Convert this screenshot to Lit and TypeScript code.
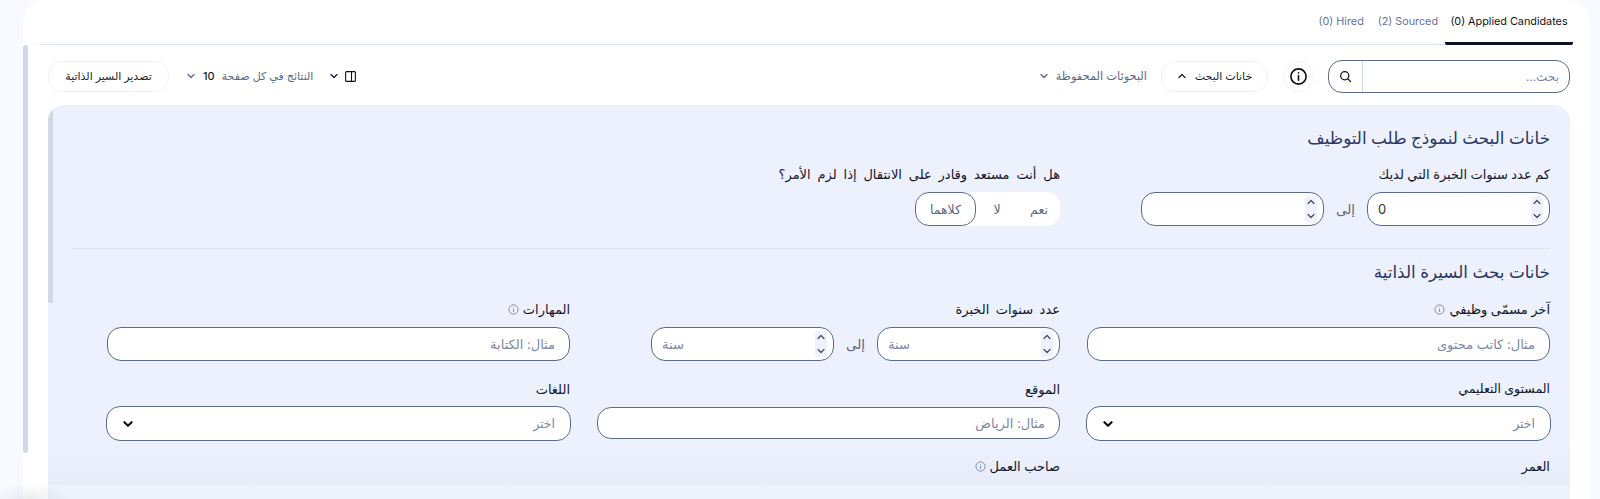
import { LitElement, html, css, svg } from "lit";
import { customElement } from "lit/decorators.js";

const chev = (up = false, size = 10, sw = 1.3) => html`<svg width=${size} height=${size} viewBox="0 0 10 10" fill="none" stroke="currentColor" stroke-width=${sw} stroke-linecap="round" stroke-linejoin="round">${up ? svg`<path d="M2 6.5 5 3.5 8 6.5"/>` : svg`<path d="M2 3.5 5 6.5 8 3.5"/>`}</svg>`;

const info = () => html`<svg class="inf" width="11" height="11" viewBox="0 0 12 12" fill="none" stroke="#6b7a9c" stroke-width=".9"><circle cx="6" cy="6" r="5"/><path d="M6 5.4V8.6M6 3.4v.8"/></svg>`;

@customElement("app-root")
export class AppRoot extends LitElement {
  static styles = css`
    :host { display: block; width: 1600px; height: 499px; overflow: hidden; position: relative; background: #f8faff;
      font-family: "Inter", "Noto Sans", "DejaVu Sans", sans-serif; color: #1a1f33; }
    * { box-sizing: border-box; }
    .card { position: absolute; left: 23px; top: 0; width: 1567px; height: 499px; background: #fff; border-radius: 24px 24px 0 0; padding: 0 17px 0 16px; }
    .sb { position: absolute; background: #cfd8e6; border-radius: 3px; width: 5px; }
    .sb.outer { left: 0; top: 45px; height: 408px; }
    .sb.inner { left: 0; top: 0; height: 198px; z-index: 2; }
    .tabs { height: 45px; display: flex; justify-content: flex-end; border-bottom: 1px solid #dbe4f0; font-size: 10.8px; }
    .tab { height: 45px; padding: 15px 7px 0; color: #64749a; white-space: nowrap; }
    .tab.on { color: #0f1222; border-bottom: 3px solid #0f1222; width: 128px; padding: 15px 0 0; text-align: center; border-radius: 0 0 2px 2px; }
    .tool { direction: rtl; display: flex; align-items: center; height: 32px; margin-top: 15px; padding: 0 3px 0 9px; font-size: 11px; }
    .search { width: 242px; height: 33px; border: 1px solid #5a6b8c; border-radius: 14px; display: flex; align-items: center; background: #fff; }
    .search input { flex: 1; min-width: 0; height: 100%; border: 0; background: none; outline: 0; padding: 0 10px; font: inherit; font-size: 12px; text-align: right; direction: rtl; }
    .search input::placeholder { color: #7c88a6; }
    .search .ic { width: 34px; height: 100%; border-right: 1px solid #cfd8e6; display: flex; align-items: center; justify-content: center; }
    .round { width: 31px; height: 31px; border-radius: 50%; border: 1px solid #eef2fb; display: flex; align-items: center; justify-content: center; margin-right: 14px; }
    .pill { height: 31px; border: 1px solid #eef2fb; border-radius: 14px; display: flex; align-items: center; justify-content: center; gap: 8px; font-weight: 500; color: #1a1f33; background: #fff; white-space: nowrap; }
    .pill.fields { width: 107px; margin-right: 15px; }
    .pill.export { width: 121px; }
    .saved { display: flex; align-items: center; gap: 7px; color: #5d6780; margin-right: 14px; white-space: nowrap; font-size: 11.4px; }
    .spacer { flex: 1; }
    .pager { display: flex; align-items: center; gap: 7px; color: #5d6780; white-space: nowrap; margin-left: 17px; }
    .pager b { font-weight: 500; color: #1a1f33; }
    .cols { display: flex; align-items: center; gap: 6px; margin-left: 16px; color: #1a1f33; }
    .panel { direction: rtl; position: relative; height: 394px; margin-top: 13px; margin-left: 9px; margin-right: 3px; background: #edf1fd; border-radius: 16px 16px 0 0; padding: 23px 20px 0 24px; overflow: hidden; }
    .content { position: relative; z-index: 1; }
    h2 { margin: 0; font-size: 16.8px; font-weight: 500; color: #2a3762; line-height: 20px; }
    .grid { display: grid; grid-template-columns: repeat(3, 463px); column-gap: 27px; }
    .grid.first { margin-top: 17px; padding-bottom: 22px; border-bottom: 1px solid #dfe3ee; }
    .f { display: flex; flex-direction: column; }
    label { font-size: 13px; font-weight: 500; line-height: 18px; height: 18px; display: flex; align-items: center; gap: 4px; color: #12162a; margin-bottom: 9px; white-space: nowrap; }
    label.wide { word-spacing: 3.4px; }
    label.mid { word-spacing: 3px; }
    label.tight { font-size: 12.5px; }
    .row2 { margin-top: 19px; }
    .row2 label { margin-bottom: 8px; }
    .row3 { margin-top: 16px; }
    h2.second { margin-top: 13px; }
    .g2 { margin-top: 18px; }
    .inp { height: 34px; border: 1px solid #5a6b8c; border-radius: 14px; background: #fff; display: flex; align-items: center; position: relative; }
    .inp input { flex: 1; min-width: 0; width: 100%; height: 100%; border: 0; background: none; outline: 0; padding: 0 14px; font: inherit; font-size: 13px; text-align: right; direction: rtl; color: #333; }
    .inp input::placeholder { color: #7c88a6; }
    .inp.loc { height: 32px; margin: 1px 0 2px; }
    .sel { height: 35px; margin: 0 -1px; justify-content: space-between; padding: 0 15px; font-size: 12.5px; color: #7c88a6; }
    .sel svg { color: #111; }
    .range { display: flex; align-items: center; }
    .range .inp { width: 183px; }
    .range span.to { width: 43px; text-align: center; font-size: 13.5px; color: #5d6780; }
    .num { direction: ltr; }
    .num input { direction: ltr; text-align: left; padding: 0 0 0 10px; }
    .spin { width: 12px; height: 26px; margin-right: 6px; background: #eef2fc; border-radius: 3px; display: flex; flex-direction: column; align-items: center; justify-content: space-between; padding: 1px 0; color: #3e4a68; flex: none; }
    .seg { width: 145px; height: 34px; background: #fff; border-radius: 14px; display: flex; align-items: center; font-size: 12.5px; color: #5d6780; }
    .seg div { flex: 1; text-align: center; height: 100%; display: flex; align-items: center; justify-content: center; }
    .seg .on { flex: none; width: 61px; border: 1px solid #5a6b8c; border-radius: 14px; }
    .fade { position: absolute; left: 0; right: 0; top: 340px; height: 40px; background: linear-gradient(to bottom, rgba(226,230,242,0), rgba(226,230,242,.42)); }
    .strip { position: absolute; left: 0; right: 0; top: 380px; height: 14px; background: #eef2fd; }
    .smudge { position: absolute; left: 0; bottom: 0; width: 70px; height: 16px; background: radial-gradient(ellipse at 30px 100%, rgba(120,128,145,.14), rgba(120,128,145,0) 72%); }
  `;

  private num(ph: string, val = "") {
    return html`<div class="inp num"><input placeholder=${ph} .value=${val} /><div class="spin">${chev(true, 10, 1.2)}${chev(false, 10, 1.2)}</div></div>`;
  }

  render() {
    return html`<div class="card">
      <div class="sb outer"></div>
      <div class="tabs">
        <div class="tab">(0) Hired</div>
        <div class="tab">(2) Sourced</div>
        <div class="tab on">(0) Applied Candidates</div>
      </div>
      <div class="tool">
        <div class="search">
          <input placeholder="بحث..." />
          <div class="ic"><svg width="13" height="13" viewBox="0 0 14 14" fill="none" stroke="#111" stroke-width="1.3" stroke-linecap="round"><circle cx="6.2" cy="6.2" r="4.4"/><path d="M9.6 9.6 12.4 12.4"/></svg></div>
        </div>
        <div class="round"><svg width="19" height="19" viewBox="0 0 20 20" fill="none" stroke="#111" stroke-width="1.7" stroke-linecap="round"><circle cx="10" cy="10" r="8"/><path d="M10 9v5M10 6v.2"/></svg></div>
        <div class="pill fields">خانات البحث ${chev(true)}</div>
        <div class="saved">البحوثات المحفوظة ${chev(false)}</div>
        <div class="spacer"></div>
        <div class="cols"><svg width="11" height="11" viewBox="0 0 11 11" fill="none" stroke="#111" stroke-width="1.1"><rect x=".6" y=".6" width="9.8" height="9.8" rx="1"/><path d="M6.5.6v9.8"/></svg>${chev(false)}</div>
        <div class="pager">النتائج في كل صفحة <b>10</b> ${chev(false)}</div>
        <div class="pill export">تصدير السير الذاتية</div>
      </div>
      <div class="panel">
        <div class="sb inner"></div>
        <div class="fade"></div>
        <div class="strip"></div>
        <div class="content">
        <h2>خانات البحث لنموذج طلب التوظيف</h2>
        <div class="grid first">
          <div class="f"><label>كم عدد سنوات الخبرة التي لديك</label>
            <div class="range">${this.num("", "0")}<span class="to">إلى</span>${this.num("")}</div></div>
          <div class="f"><label class="wide">هل أنت مستعد وقادر على الانتقال إذا لزم الأمر؟</label>
            <div class="seg"><div>نعم</div><div>لا</div><div class="on">كلاهما</div></div></div>
        </div>
        <h2 class="second">خانات بحث السيرة الذاتية</h2>
        <div class="grid g2">
          <div class="f"><label>آخر مسمّى وظيفي ${info()}</label><div class="inp"><input placeholder="مثال: كاتب محتوى" /></div></div>
          <div class="f"><label class="mid">عدد سنوات الخبرة</label><div class="range">${this.num("سنة")}<span class="to">إلى</span>${this.num("سنة")}</div></div>
          <div class="f"><label>المهارات ${info()}</label><div class="inp"><input placeholder="مثال: الكتابة" /></div></div>
        </div>
        <div class="grid row2">
          <div class="f"><label class="tight">المستوى التعليمي</label><div class="inp sel"><span>اختر</span>${chev(false, 12, 1.8)}</div></div>
          <div class="f"><label>الموقع</label><div class="inp loc"><input placeholder="مثال: الرياض" /></div></div>
          <div class="f"><label>اللغات</label><div class="inp sel"><span>اختر</span>${chev(false, 12, 1.8)}</div></div>
        </div>
        <div class="grid row3">
          <div class="f"><label>العمر</label></div>
          <div class="f"><label>صاحب العمل ${info()}</label></div>
        </div>
        </div>
      </div>
    </div>
    <div class="smudge"></div>`;
  }
}
